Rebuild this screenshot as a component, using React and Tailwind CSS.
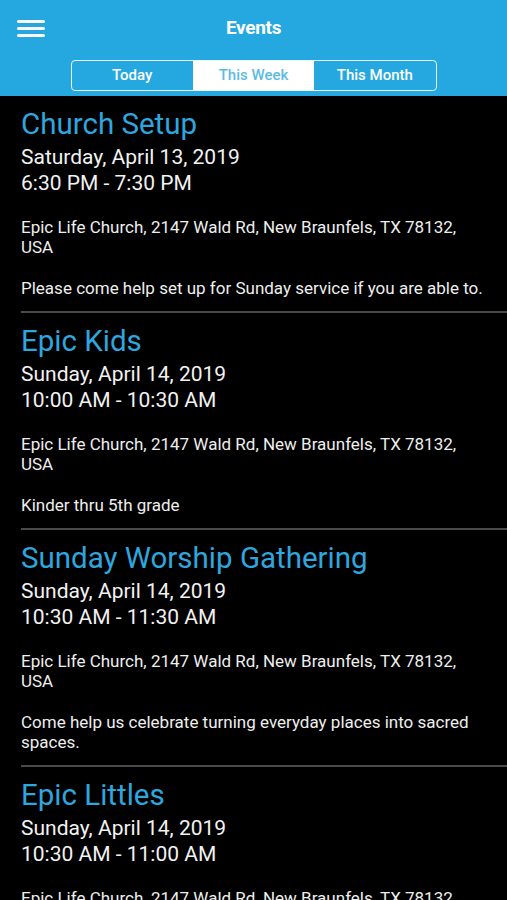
import React from "react";

const events = [
  {
    title: "Church Setup",
    date: "Saturday, April 13, 2019",
    time: "6:30 PM - 7:30 PM",
    place: "Epic Life Church, 2147 Wald Rd, New Braunfels, TX 78132, USA",
    note: "Please come help set up for Sunday service if you are able to.",
  },
  {
    title: "Epic Kids",
    date: "Sunday, April 14, 2019",
    time: "10:00 AM - 10:30 AM",
    place: "Epic Life Church, 2147 Wald Rd, New Braunfels, TX 78132, USA",
    note: "Kinder thru 5th grade",
  },
  {
    title: "Sunday Worship Gathering",
    date: "Sunday, April 14, 2019",
    time: "10:30 AM - 11:30 AM",
    place: "Epic Life Church, 2147 Wald Rd, New Braunfels, TX 78132, USA",
    note: "Come help us celebrate turning everyday places into sacred spaces.",
  },
  {
    title: "Epic Littles",
    date: "Sunday, April 14, 2019",
    time: "10:30 AM - 11:00 AM",
    place: "Epic Life Church, 2147 Wald Rd, New Braunfels, TX 78132, USA",
    note: "Nursery and toddlers",
  },
];

const tabs = ["Today", "This Week", "This Month"];

export default function App() {
  return (
    <div className="w-[507px] h-[900px] overflow-hidden bg-black font-['Roboto','Liberation_Sans',sans-serif]">
      <header className="h-[96px] bg-[#25a8e0] flex flex-col">
        <div className="h-[56px] relative flex items-center justify-center">
          <button type="button" className="absolute left-[17px] top-[20px] w-[28px] h-[17px] flex flex-col justify-between" aria-label="Menu">
            <span className="block h-[3px] rounded-full bg-white" />
            <span className="block h-[3px] rounded-full bg-white" />
            <span className="block h-[3px] rounded-full bg-white" />
          </button>
          <div className="text-white text-[19px] font-bold tracking-[-0.3px]">Events</div>
        </div>
        <div className="flex justify-center pt-[4px]">
          <div className="flex w-[366px] h-[31px] border-[1.5px] border-white/90 rounded-[4px] overflow-hidden">
            {tabs.map((t, i) => (
              <div
                key={t}
                className={`flex-1 flex items-center justify-center text-[15px] font-medium ${i === 1 ? "bg-white text-[#5bbbe6]" : "text-white"}`}
              >
                {t}
              </div>
            ))}
          </div>
        </div>
      </header>

      <div className="pl-[21px]">
        {events.map((e, i) => (
          <div key={e.title} className={`${i === 0 ? "pt-[10px]" : "pt-[10px]"} pb-[13px] pr-[21px] border-b-[2px] border-[#4a4a4a]`}>
            <div className="text-[29.5px] leading-[36px] text-[#2ea6df]">{e.title}</div>
            <div className="mt-[2px] text-[21px] leading-[26px] text-[#f2f2f2]">{e.date}</div>
            <div className="text-[21px] leading-[26px] text-[#f2f2f2]">{e.time}</div>
            <div className="mt-[21px] text-[17px] leading-[20px] text-[#eeeeee]">{e.place}</div>
            <div className="mt-[21px] text-[17px] leading-[20px] text-[#eeeeee]">{e.note}</div>
          </div>
        ))}
      </div>
    </div>
  );
}
